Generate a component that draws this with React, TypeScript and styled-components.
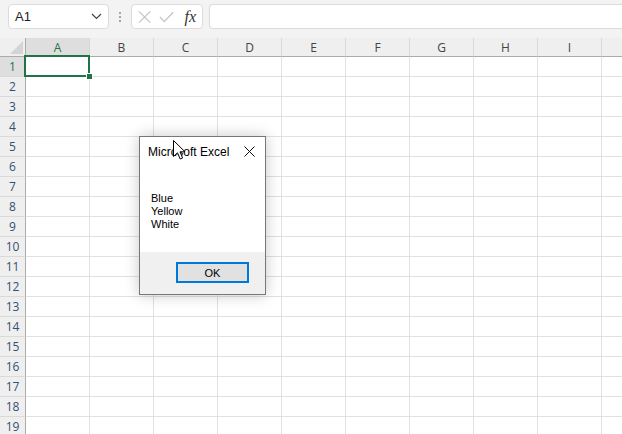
import styled, { createGlobalStyle } from "styled-components";

const GlobalStyle = createGlobalStyle`
  html, body {
    margin: 0;
    padding: 0;
    background: #ffffff;
  }
  body {
    font-family: "Liberation Sans", Arial, sans-serif;
  }
`;

// the last column runs past the window edge, its letter is not in view
const COLUMNS = ["A", "B", "C", "D", "E", "F", "G", "H", "I", ""];
const ROWS = Array.from({ length: 19 }, (_, i) => i + 1);

const Window = styled.div`
  position: relative;
  width: 622px;
  height: 434px;
  overflow: hidden;
  background: #ffffff;
`;

const Toolbar = styled.div`
  height: 38px;
  background: #f3f3f3;
  display: flex;
  align-items: flex-start;
  padding: 4px 0 0 8px;
  box-sizing: border-box;
`;

const NameBox = styled.div`
  width: 101px;
  height: 25px;
  box-sizing: border-box;
  background: #ffffff;
  border: 1px solid #dcdcdc;
  border-radius: 4px;
  display: flex;
  align-items: center;
  justify-content: space-between;
  padding: 0 6px 0 6px;
  font-size: 13px;
  color: #222;
`;

const Dots = styled.div`
  width: 22px;
  height: 25px;
  display: flex;
  flex-direction: column;
  align-items: center;
  justify-content: center;
  gap: 2px;

  span {
    width: 2px;
    height: 2px;
    background: #8a8a8a;
    border-radius: 1px;
  }
`;

const FormulaButtons = styled.div`
  width: 72px;
  height: 25px;
  box-sizing: border-box;
  background: #ffffff;
  border: 1px solid #dcdcdc;
  border-radius: 4px;
  display: flex;
  align-items: center;
  padding: 0 6px 0 6px;
  gap: 8px;
`;

const Fx = styled.span`
  font-family: "Liberation Serif", "Times New Roman", serif;
  font-style: italic;
  font-size: 16px;
  color: #333;
  margin-left: 2px;
`;

const FormulaInput = styled.div`
  flex: 1;
  height: 25px;
  margin-left: 6px;
  box-sizing: border-box;
  background: #ffffff;
  border: 1px solid #dcdcdc;
  border-right: none;
  border-radius: 4px 0 0 4px;
`;

const Sheet = styled.div`
  display: grid;
  grid-template-columns: 26px repeat(${COLUMNS.length}, 64px);
  grid-template-rows: 19px;
  grid-auto-rows: 20px;
`;

const Corner = styled.div`
  background: #efefef;
  border-right: 1px solid #ababab;
  border-bottom: 1px solid #ababab;
  box-sizing: border-box;
  display: flex;
  align-items: flex-end;
  justify-content: flex-end;
  padding: 0 2px 2px 0;
`;

const ColHeader = styled.div<{ $selected?: boolean }>`
  background: ${(p) => (p.$selected ? "#dedede" : "#efefef")};
  color: ${(p) => (p.$selected ? "#217346" : "#444")};
  border-right: 1px solid #d8d8d8;
  border-bottom: 1px solid #ababab;
  box-sizing: border-box;
  display: flex;
  align-items: center;
  justify-content: center;
  font-family: "Open Sans", "Liberation Sans", sans-serif;
  font-size: 12px;
  padding-top: 1px;
`;

const RowHeader = styled.div<{ $selected?: boolean }>`
  background: ${(p) => (p.$selected ? "#dedede" : "#efefef")};
  color: ${(p) => (p.$selected ? "#217346" : "#34506f")};
  border-right: 1px solid #ababab;
  border-bottom: 1px solid #dadada;
  box-sizing: border-box;
  display: flex;
  align-items: center;
  justify-content: center;
  font-family: "Open Sans", "Liberation Sans", sans-serif;
  font-size: 12px;
`;

const Cell = styled.div`
  position: relative;
  border-right: 1px solid #e1e1e1;
  border-bottom: 1px solid #e1e1e1;
  box-sizing: border-box;
`;

const Selection = styled.div`
  position: absolute;
  top: -2px;
  left: -2px;
  right: -1px;
  bottom: -1px;
  border: 2px solid #217346;
  z-index: 1;
`;

const FillHandle = styled.div`
  position: absolute;
  right: -5px;
  bottom: -5px;
  width: 5px;
  height: 5px;
  background: #217346;
  border: 1px solid #ffffff;
`;

const Dialog = styled.div`
  position: absolute;
  left: 139px;
  top: 136px;
  width: 127px;
  height: 159px;
  box-sizing: border-box;
  background: #ffffff;
  border: 1px solid #777777;
  box-shadow: 0 0 14px rgba(0, 0, 0, 0.22);
  display: flex;
  flex-direction: column;
  z-index: 5;
`;

const TitleBar = styled.div`
  height: 29px;
  display: flex;
  align-items: center;
  justify-content: space-between;
  padding: 0 10px 0 8px;
  font-size: 12px;
  color: #000;
`;

const Message = styled.div`
  padding: 26px 11px 0 11px;
  font-size: 11px;
  line-height: 13px;
  color: #000;
`;

const Footer = styled.div`
  margin-top: auto;
  height: 42px;
  background: #f0f0f0;
  display: flex;
  justify-content: flex-end;
  align-items: flex-start;
  padding: 10px 16px 0 0;
  box-sizing: border-box;
`;

const OkButton = styled.button`
  width: 73px;
  height: 21px;
  box-sizing: border-box;
  background: #e1e1e1;
  border: 2px solid #0078d7;
  font-family: "Liberation Sans", Arial, sans-serif;
  font-size: 11px;
  color: #000;
  padding: 0;
`;

const Cursor = styled.svg`
  position: absolute;
  left: 173px;
  top: 140px;
  z-index: 10;
`;

export default function App() {
  return (
    <Window>
      <GlobalStyle />
      <Toolbar>
        <NameBox>
          <span>A1</span>
          <svg width="11" height="7" viewBox="0 0 11 7">
            <path d="M1 1 L5.5 5.5 L10 1" fill="none" stroke="#444" strokeWidth="1.2" />
          </svg>
        </NameBox>
        <Dots>
          <span />
          <span />
          <span />
        </Dots>
        <FormulaButtons>
          <svg width="14" height="14" viewBox="0 0 14 14">
            <path d="M1 1 L13 13 M13 1 L1 13" stroke="#c2c2c2" strokeWidth="1.2" />
          </svg>
          <svg width="16" height="14" viewBox="0 0 16 14">
            <path d="M1 7 L5.5 12 L15 2" fill="none" stroke="#c2c2c2" strokeWidth="1.2" />
          </svg>
          <Fx>fx</Fx>
        </FormulaButtons>
        <FormulaInput />
      </Toolbar>

      <Sheet>
        <Corner>
          <svg width="13" height="13" viewBox="0 0 13 13">
            <path d="M13 0 L13 13 L0 13 Z" fill="#d4d4d4" />
          </svg>
        </Corner>
        {COLUMNS.map((c, i) => (
          <ColHeader key={i} $selected={c === "A"}>
            {c}
          </ColHeader>
        ))}
        {ROWS.map((r) => (
          <RowContent key={r} row={r} />
        ))}
      </Sheet>

      <Dialog>
        <TitleBar>
          <span>Microsoft Excel</span>
          <svg width="11" height="11" viewBox="0 0 11 11">
            <path d="M0.5 0.5 L10.5 10.5 M10.5 0.5 L0.5 10.5" stroke="#111" strokeWidth="1" />
          </svg>
        </TitleBar>
        <Message>
          <div>Blue</div>
          <div>Yellow</div>
          <div>White</div>
        </Message>
        <Footer>
          <OkButton>OK</OkButton>
        </Footer>
      </Dialog>

      <Cursor width="13" height="21" viewBox="0 0 13 21">
        <path
          d="M0.5 0.5 L0.5 16.5 L4.5 12.8 L7.2 19 L9.6 18 L7 11.8 L12 11.8 Z"
          fill="#ffffff"
          stroke="#000000"
          strokeWidth="1"
          strokeLinejoin="miter"
        />
      </Cursor>
    </Window>
  );
}

function RowContent({ row }: { row: number }) {
  return (
    <>
      <RowHeader $selected={row === 1}>{row}</RowHeader>
      {COLUMNS.map((_, i) => (
        <Cell key={i}>
          {row === 1 && i === 0 && (
            <Selection>
              <FillHandle />
            </Selection>
          )}
        </Cell>
      ))}
    </>
  );
}
